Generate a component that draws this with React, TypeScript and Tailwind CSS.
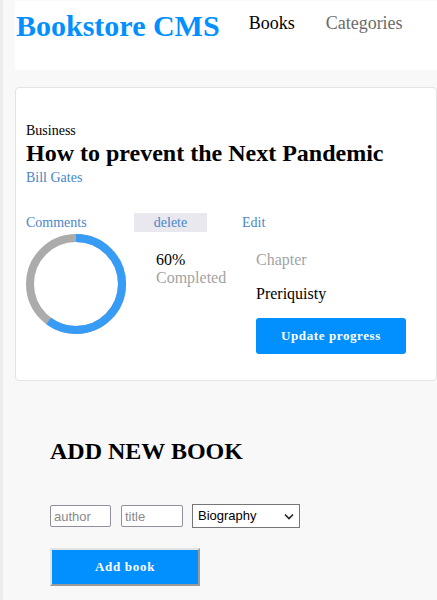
import React from "react";

const serif = { fontFamily: '"Liberation Serif", "Times New Roman", serif' };

function Progreso({ pct }: { pct: number }) {
  const r = 46;
  const c = 2 * Math.PI * r;
  return (
    <svg width="100" height="100" viewBox="0 0 100 100" className="shrink-0">
      <circle cx="50" cy="50" r={r} fill="none" stroke="#ababab" strokeWidth="8" />
      <circle
        cx="50"
        cy="50"
        r={r}
        fill="none"
        stroke="#379cf6"
        strokeWidth="8"
        strokeDasharray={`${(c * pct) / 100} ${c}`}
        transform="rotate(-90 50 50)"
      />
    </svg>
  );
}

export default function App() {
  return (
    <div
      className="min-h-[600px] w-[437px] overflow-hidden border-l-[3px] border-[#ececec] bg-[#f8f8f8] pt-px"
      style={serif}
    >
      {/* cabeçalho */}
      <header className="ml-3 flex h-[69px] items-start bg-white pt-[8px]">
        <h1 className="ml-px text-[30px] font-bold leading-[34px] text-[#0290ff]">Bookstore CMS</h1>
        <nav className="ml-[29px] mt-[3px] flex gap-[31px] text-[18px] leading-[22px]">
          <span className="text-black">Books</span>
          <span className="text-[#6b6b6b]">Categories</span>
        </nav>
      </header>

      {/* cartão do livro */}
      <section className="ml-3 mt-[17px] h-[294px] w-[422px] rounded-[4px] border border-[#e3e3e3] bg-white px-[10px] pt-[34px]">
        <p className="text-[14px] leading-[17px] text-black">Business</p>
        <h2 className="mt-0 text-[24px] font-bold leading-[28px] text-black">
          How to prevent the Next Pandemic
        </h2>
        <p className="mt-[2px] text-[14px] leading-[17px] text-[#4a86c8]">Bill Gates</p>

        <div className="mt-[27px] flex items-center text-[14px] leading-[17px] text-[#4a86c8]">
          <span className="w-[108px]">Comments</span>
          <span className="flex h-[19px] w-[73px] items-center justify-center bg-[#e8e8ee]">delete</span>
          <span className="ml-[35px]">Edit</span>
        </div>

        <div className="mt-[2px] flex">
          <Progreso pct={60} />
          <div className="ml-[30px] mt-[17px] w-[100px] text-[16px] leading-[18px]">
            <p className="text-black">60%</p>
            <p className="text-[#a3a3a3]">Completed</p>
          </div>
          <div className="mt-[17px] flex flex-col items-start">
            <p className="text-[16px] leading-[18px] text-[#a3a3a3]">Chapter</p>
            <p className="mt-[16px] text-[16px] leading-[18px] text-black">Preriquisty</p>
            <button
              className="mt-[15px] h-[36px] w-[150px] rounded-[3px] bg-[#0290ff] text-[13px] font-bold tracking-[0.6px] text-white"
              style={serif}
            >
              Update progress
            </button>
          </div>
        </div>
      </section>

      {/* formulário */}
      <section className="ml-[47px] mt-[57px]">
        <h2 className="text-[24px] font-bold leading-[26px] text-black">ADD NEW BOOK</h2>
        <form
          className="mt-[40px] flex items-center"
          style={{ fontFamily: '"Liberation Sans", Arial, sans-serif' }}
        >
          <input
            placeholder="author"
            className="h-[22px] w-[61px] rounded-[2px] border border-[#8f8f9d] bg-white px-[3px] text-[13px] placeholder:text-[#8a8a8a]"
          />
          <input
            placeholder="title"
            className="ml-[10px] h-[22px] w-[62px] rounded-[2px] border border-[#8f8f9d] bg-white px-[3px] text-[13px] placeholder:text-[#8a8a8a]"
          />
          <div className="relative ml-[9px] flex h-[24px] w-[108px] items-center border border-[#767676] bg-white pl-[5px] text-[13px] text-black">
            Biography
            <svg className="absolute right-[5px] top-[8px]" width="10" height="7" viewBox="0 0 10 7">
              <path d="M1 1.5 L5 5.5 L9 1.5" fill="none" stroke="#222" strokeWidth="1.6" />
            </svg>
          </div>
        </form>
        <button
          className="mt-[20px] h-[38px] w-[150px] border-2 border-[#e3e3e3] border-b-[#9a9a9a] border-r-[#9a9a9a] bg-[#0290ff] text-[13px] font-bold tracking-[0.7px] text-white"
          style={serif}
        >
          Add book
        </button>
      </section>
    </div>
  );
}
